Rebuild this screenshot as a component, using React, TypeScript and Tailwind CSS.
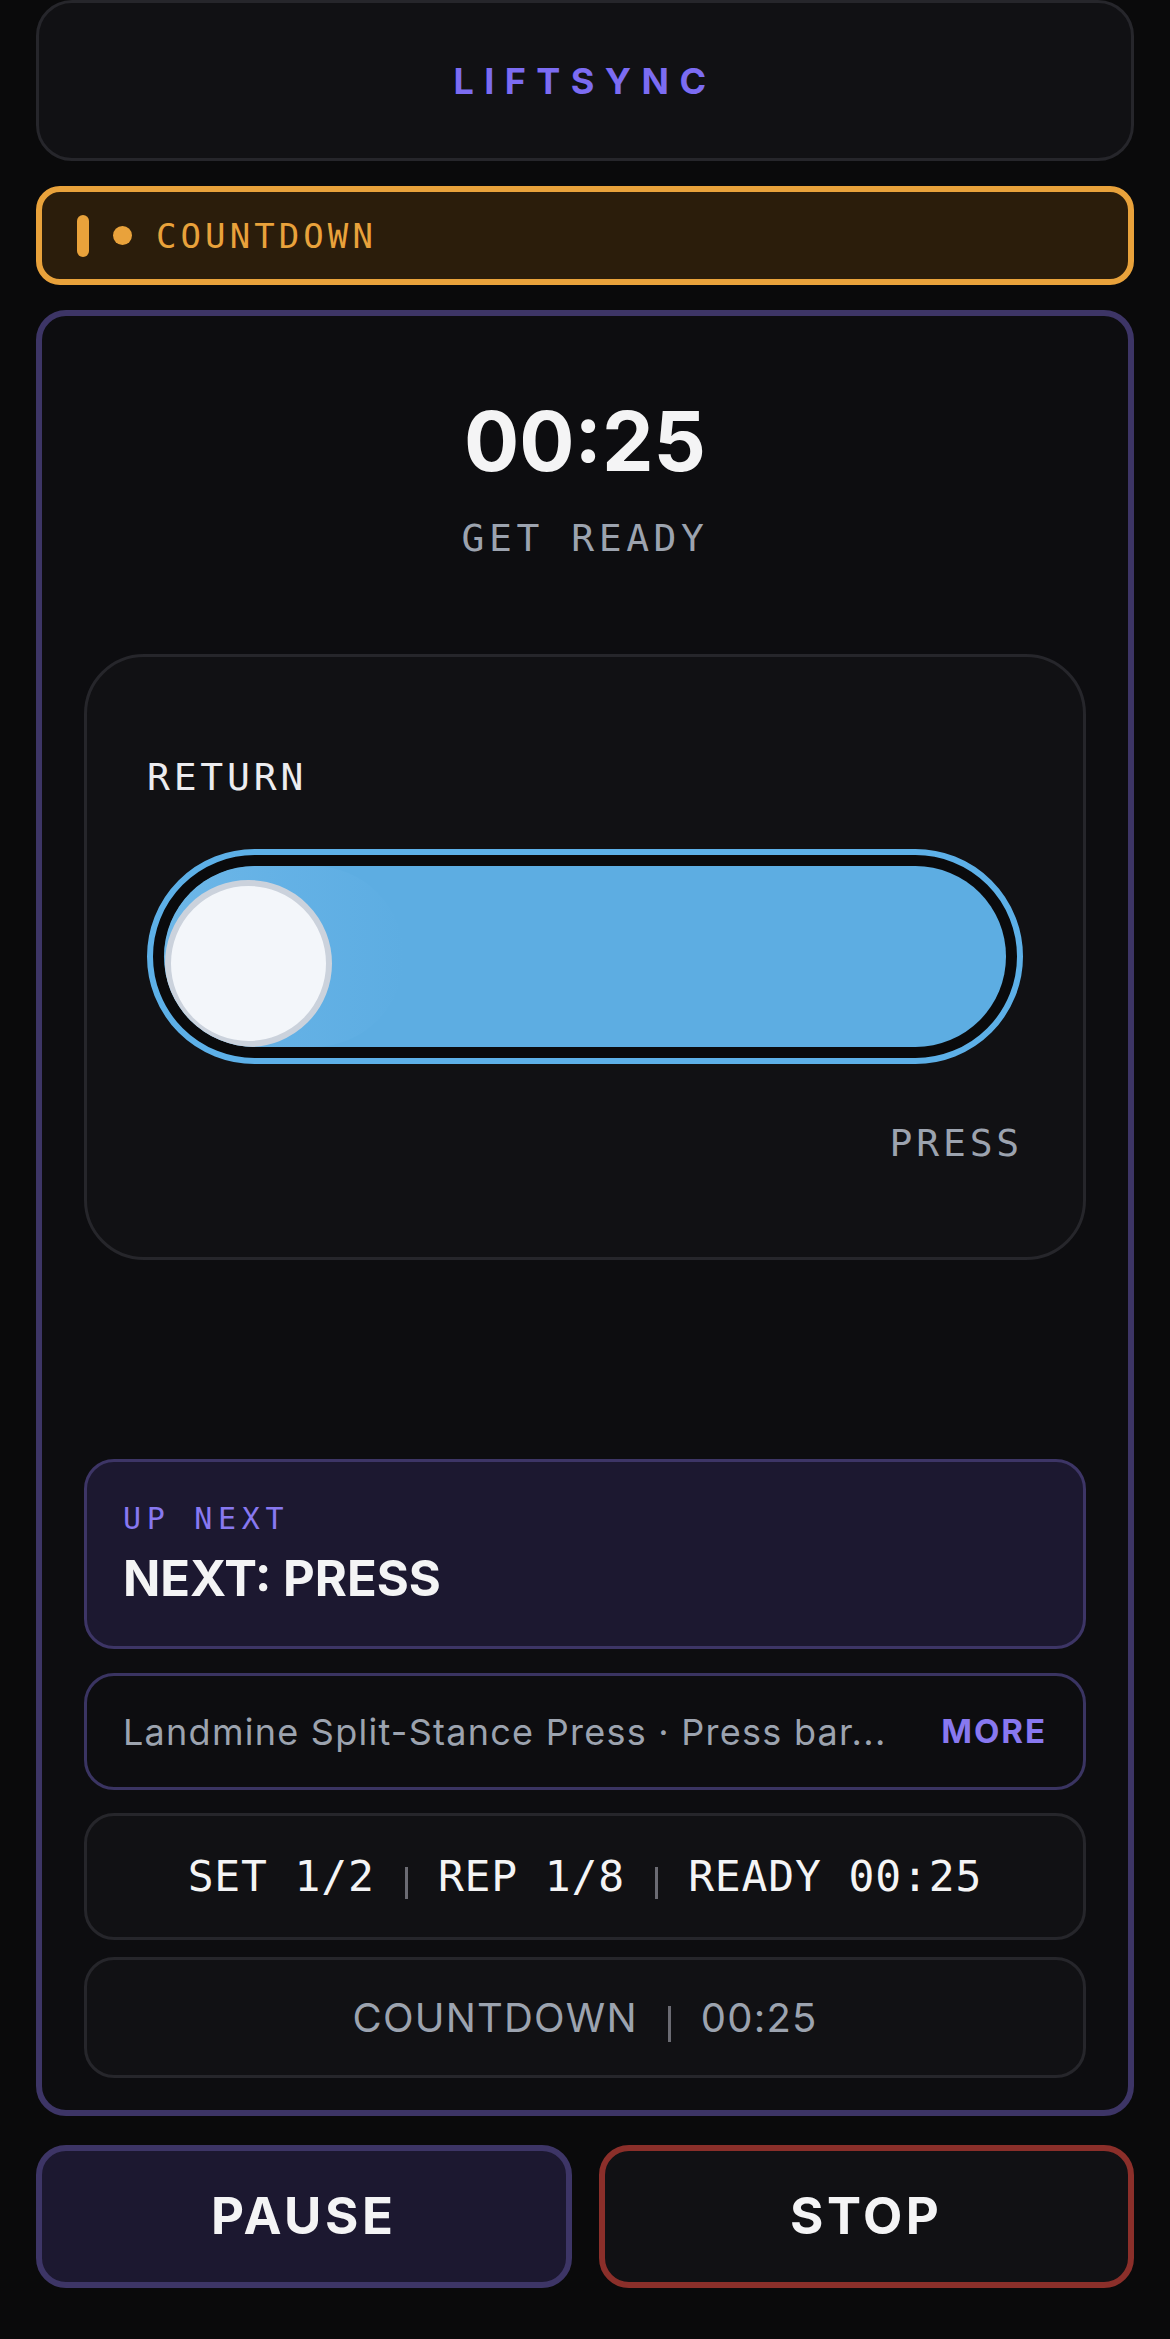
import React from "react"

// --- fonts ---
const mono = { fontFamily: '"DejaVu Sans Mono", "Liberation Mono", monospace' }
const sans = { fontFamily: 'Inter, "Noto Sans", sans-serif' }

function Sep({ h = 32 }: { h?: number }) {
  return <span className="inline-block w-[3px] bg-[#6b6b73] mx-[30px] translate-y-[6px]" style={{ height: h }} />
}

export default function App() {
  return (
    <div className="min-h-screen w-full bg-[#0a0a0b] px-[36px] pb-[51px] flex flex-col" style={sans}>
      {/* header */}
      <header className="h-[161px] rounded-[36px] border-[3px] border-[#26262b] bg-[#111114] flex items-center justify-center">
        <span className="text-[36px] font-bold tracking-[0.29em] text-[#7c6cf2] leading-none">LIFTSYNC</span>
      </header>

      {/* status */}
      <div className="mt-[25px] h-[99px] rounded-[24px] border-[6px] border-[#e9a23b] bg-[#2b1d0b] flex items-center px-[35px] gap-[24px]">
        <span className="w-[12px] h-[42px] rounded-full bg-[#e9a23b]" />
        <span className="w-[19px] h-[19px] rounded-full bg-[#e9a23b]" />
        <span className="text-[34px] tracking-[0.12em] text-[#e9a23b] leading-none" style={mono}>COUNTDOWN</span>
      </div>

      {/* main card */}
      <main className="mt-[25px] rounded-[30px] border-[6px] border-[#3d3566] bg-[#0d0d10] px-[42px] pt-[85px] pb-[32px] flex flex-col">
        <div className="text-center text-[82px] font-bold text-[#f4f4f5] leading-none">00:25</div>
        <div className="mt-[36px] text-center text-[38px] tracking-[0.12em] text-[#9ca3af] leading-none" style={mono}>GET READY</div>

        {/* slider card */}
        <section className="mt-[97px] h-[606px] rounded-[60px] border-[3px] border-[#26262b] bg-[#111114] px-[60px] pt-[101px] flex flex-col">
          <div className="text-[38px] tracking-[0.1em] text-[#ececef] leading-none" style={mono}>RETURN</div>
          <div className="mt-[53px] h-[215px] rounded-full border-[6px] border-[#5db0e8] bg-[#0a0a0c] p-[11px]">
            <div className="relative h-full rounded-full bg-[#5dade2] overflow-hidden">
              <div className="absolute left-0 top-0 h-full w-[240px] rounded-full bg-gradient-to-r from-[#78bdeb] via-[#68b4e8] to-transparent opacity-60" />
              <div className="absolute left-[1px] bottom-0 w-[167px] h-[167px] rounded-full bg-[#f3f6fa] border-[6px] border-[#cbd2dc]" />
            </div>
          </div>
          <div className="mt-[60px] text-right text-[38px] tracking-[0.1em] text-[#9ca3af] leading-none" style={mono}>PRESS</div>
        </section>

        {/* up next */}
        <section className="mt-[199px] h-[190px] rounded-[30px] border-[3px] border-[#3d3566] bg-[#1c1830] px-[36px] pt-[42px]">
          <div className="text-[30px] tracking-[0.19em] text-[#8878f0] leading-none" style={mono}>UP NEXT</div>
          <div className="mt-[20px] text-[49px] font-bold text-[#f4f4f5] leading-none">NEXT: PRESS</div>
        </section>

        {/* description */}
        <section className="mt-[24px] h-[117px] rounded-[30px] border-[3px] border-[#3a3462] bg-[#0d0d10] px-[36px] flex items-center justify-between gap-[20px]">
          <span className="whitespace-nowrap text-[36px] tracking-[0.035em] text-[#9ca3af] leading-none">Landmine Split-Stance Press · Press bar...</span>
          <span className="text-[33px] font-bold tracking-[0.06em] text-[#8878f0] leading-none">MORE</span>
        </section>

        {/* stats */}
        <section className="mt-[23px] h-[127px] rounded-[30px] border-[3px] border-[#26262b] bg-[#111114] flex items-center justify-center">
          <div className="text-[43px] tracking-[0.02em] text-[#f4f4f5] leading-none whitespace-pre flex items-center" style={mono}>
            <span>SET 1/2</span>
            <Sep />
            <span>REP 1/8</span>
            <Sep />
            <span>READY 00:25</span>
          </div>
        </section>

        <section className="mt-[17px] h-[121px] rounded-[30px] border-[3px] border-[#26262b] bg-[#111114] flex items-center justify-center">
          <div className="text-[40px] tracking-[0.03em] text-[#9ca3af] leading-none flex items-center">
            <span>COUNTDOWN</span>
            <Sep h={36} />
            <span>00:25</span>
          </div>
        </section>
      </main>

      {/* controls */}
      <div className="mt-[29px] grid grid-cols-2 gap-[27px]">
        <button className="h-[143px] rounded-[30px] border-[6px] border-[#3d3566] bg-[#1c1830] text-[51px] font-bold tracking-[0.07em] text-[#f4f4f5]">PAUSE</button>
        <button className="h-[143px] rounded-[30px] border-[6px] border-[#8b2f2a] bg-[#111114] text-[51px] font-bold tracking-[0.07em] text-[#f4f4f5]">STOP</button>
      </div>
    </div>
  )
}
